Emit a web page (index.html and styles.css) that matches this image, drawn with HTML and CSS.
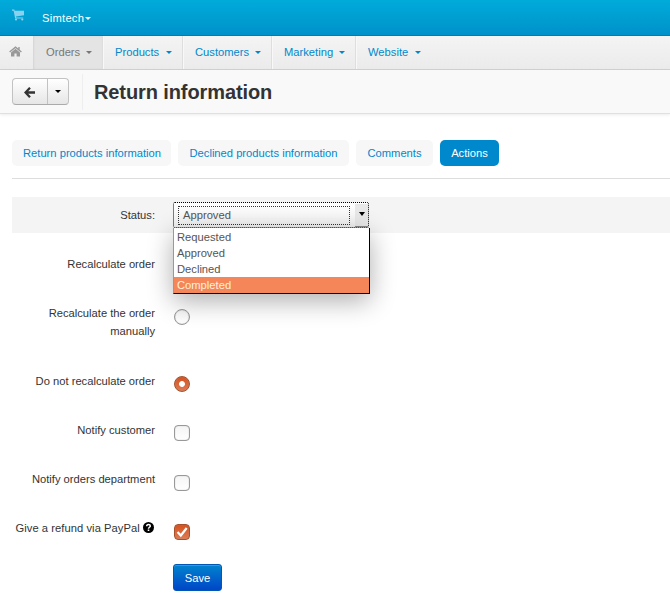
FILE: index.html
```html
<!DOCTYPE html>
<html lang="en">
<head>
<meta charset="utf-8">
<title>Return information</title>
<link rel="stylesheet" href="styles.css">
</head>
<body>
<header class="topbar">
  <svg class="cart" width="13" height="12" viewBox="0 0 13 12"><path d="M0 .5h2.300l.4 1.200H12v4.600L4 7.500l.2.900h7v1.200H3.200L1.600 1.700H0z" fill="currentColor"/><circle cx="4" cy="10.500" r="1.100" fill="currentColor"/><circle cx="10.300" cy="10.500" r="1.100" fill="currentColor"/></svg>
  <a class="company"><span class="t-company">Simtech</span><i class="caret"></i></a>
</header>
<nav class="menu">
  <a class="home"><svg width="13" height="11" viewBox="0 0 13 11"><path d="M6.500 2.700 2 6.400V10.500h3.400V7.500h2.200v3H11V6.400z" fill="currentColor"/><path d="M.6 6 6.500 1.100 12.400 6M10 1v3" fill="none" stroke="currentColor" stroke-width="1.400"/></svg></a>
  <a class="item orders active"><span>Orders</span><i class="caret"></i></a>
  <a class="item products"><span>Products</span><i class="caret"></i></a>
  <a class="item customers"><span>Customers</span><i class="caret"></i></a>
  <a class="item marketing"><span>Marketing</span><i class="caret"></i></a>
  <a class="item website"><span>Website</span><i class="caret"></i></a>
</nav>
<div class="heading">
  <div class="back-group">
    <button class="back"><svg width="12" height="11" viewBox="0 0 12 11"><path d="M6 .8 1.500 5.500 6 10.200M2 5.500H11" fill="none" stroke="#333" stroke-width="2.300"/></svg></button>
    <button class="more"><i class="caret"></i></button>
  </div>
  <h1>Return information</h1>
</div>
<main>
  <div class="tabs">
    <a class="tab t1">Return products information</a>
    <a class="tab t2">Declined products information</a>
    <a class="tab t3">Comments</a>
    <a class="tab t4 current">Actions</a>
  </div>
  <form class="form">
    <div class="row shaded">
      <label>Status:</label>
      <div class="select">
        <div class="box"><span class="value">Approved</span><span class="arrow"><i class="caret"></i></span></div>
        <ul class="options">
          <li>Requested</li><li>Approved</li><li>Declined</li><li class="chosen">Completed</li>
        </ul>
      </div>
    </div>
    <div class="row"><label>Recalculate order</label></div>
    <div class="row tall"><label>Recalculate the order manually</label><span class="control radio"></span></div>
    <div class="row"><label>Do not recalculate order</label><span class="control radio on"></span></div>
    <div class="row"><label>Notify customer</label><span class="control check"></span></div>
    <div class="row low"><label>Notify orders department</label><span class="control check"></span></div>
    <div class="row low"><label class="wide">Give a refund via PayPal <svg class="help" width="11" height="11" viewBox="0 0 11 11"><circle cx="5.500" cy="5.500" r="5.500" fill="#000"/><path d="M3.700 4.200C3.700 1.700 7.300 1.900 7.300 4 7.300 5.300 5.500 5.200 5.500 6.700" fill="none" stroke="#fff" stroke-width="1.500"/><path d="M4.700 7.500h1.600V9H4.700z" fill="#fff"/></svg></label><span class="control check on"><svg width="14" height="14" viewBox="0 0 14 14"><path d="M2.500 7 5.800 10.500 11.700 3" fill="none" stroke="#fff" stroke-width="2.200"/></svg></span></div>
    <button class="save" type="button">Save</button>
  </form>
</main>
</body>
</html>
```
FILE: styles.css
```css
* { box-sizing: border-box; }
body {
  margin: 0;
  height: 600px;
  overflow: hidden;
  background: #fff;
  color: #333;
  font: 11.2px/18px "Liberation Sans", Arial, sans-serif;
}
button { font: inherit; padding: 0; }
svg { display: block; }
.caret {
  width: 0;
  height: 0;
  border: 3px solid transparent;
  border-top-color: currentColor;
  border-bottom: 0;
}
.topbar {
  height: 36px;
  display: flex;
  padding-left: 12px;
  background: linear-gradient(#00abda, #0092ca);
  border-bottom: 1px solid #007caf;
  color: #fff;
}
.cart { margin-top: 9px; color: #8bd1ed; }
.company { display: flex; align-items: center; margin-left: 17px; height: 36px; }
.company .caret { margin-left: 1px; }
.t-company { letter-spacing: .25px; }
.menu {
  height: 34px;
  display: flex;
  background: linear-gradient(#f4f4f4, #ebebeb);
  border-bottom: 1px solid #d2d2d2;
  color: #0088cc;
}
.home { width: 33px; padding: 10px 0 0 9px; color: #999; }
.item {
  display: flex;
  align-items: center;
  justify-content: space-between;
  padding: 0 10px 2px 12px;
  border-right: 1px solid #dedede;
  box-shadow: inset 1px 0 #f8f8f8;
}
.menu .caret { margin-top: 1px; }
.orders { width: 70px; }
.products { width: 80px; }
.customers { width: 89px; }
.marketing { width: 84px; }
.website { width: 75px; border-right: 0; }
.active { background: #e4e4e4; color: #777; box-shadow: inset 1px 0 2px #d4d4d4; padding-left: 13px; }
.heading {
  height: 44px;
  display: flex;
  background: #f9f9f9;
  border-bottom: 1px solid #e0e0e0;
  box-shadow: 0 1px 3px rgba(0,0,0,.08);
  padding: 8px 12px 0;
}
.back-group {
  display: flex;
  width: 57px;
  height: 27px;
  border: 1px solid #c2c2c2;
  border-bottom-color: #aaa;
  border-radius: 4px;
  background: linear-gradient(#fff, #e6e6e6);
}
.back-group button { display: grid; place-items: center; border: 0; background: none; color: #000; }
.back-group .back { width: 34px; padding-top: 2px; }
.back-group .more { width: 21px; border-left: 1px solid #c2c2c2; }
h1 {
  margin: -4px 0 0 13px;
  padding-left: 11px;
  height: 36px;
  border-left: 1px solid #eee;
  font-size: 20px;
  line-height: 36px;
  letter-spacing: -.1px;
}
main { padding: 26px 0 0 12px; }
.tabs {
  display: flex;
  gap: 7px;
  height: 39px;
  border-bottom: 1px solid #ddd;
  color: #0088cc;
}
.tab { height: 26px; line-height: 26px; border-radius: 5px; background: #f7f7f7; text-align: center; }
.t1 { width: 159px; padding-left: 1px; }
.t2 { width: 171px; }
.t3 { width: 77px; }
.t4 { width: 59px; }
.current { background: #0088cc; color: #fff; }
.form { margin-top: 18px; }
.row { display: flex; height: 36px; padding-top: 9px; margin-bottom: 13px; }
.tall { height: 55px; }
.shaded { background: #f4f4f4; padding-top: 5px; }
.row label { width: 143px; padding-left: 2px; text-align: right; }
.row .wide { white-space: nowrap; letter-spacing: .05px; }
.shaded label { padding-top: 4px; }
.control { width: 16px; height: 16px; margin: 5px 0 0 19px; border: 1px solid #999; background: linear-gradient(#f5f5f5, #fff); }
.row:not(.tall) .control { margin-top: 4px; }
.row.low .control { margin-top: 5px; }
.radio { border-radius: 50%; box-shadow: inset 0 0 1px #999; }
.check { border-radius: 4px; box-shadow: inset 0 0 1px #999; }
.control.on { border-color: #a6502e; background: linear-gradient(#d4521f, #e07b52); }
.control.radio.on { background: radial-gradient(circle, #fff 0 2.500px, transparent 3.300px), linear-gradient(#d4521f, #e07b52); }
.help { display: inline-block; vertical-align: -1px; margin-right: 1px; }
.select { position: relative; width: 196px; margin-left: 18px; color: #555; }
.box {
  display: flex;
  height: 26px;
  border: 1px dotted #000;
  border-radius: 2px;
  background: linear-gradient(#fff, #f0f0f0);
}
.value { width: 172px; height: 19px; margin: 3px 0 0 4px; padding-left: 4px; border: 1px dotted #333; line-height: 17px; }
.arrow { width: 13px; margin: 1px 0 0 auto; display: grid; place-items: center; background: #e8e8e8; border-bottom: 1px solid #888; color: #000; }
.arrow .caret { margin-bottom: 2px; border-top-width: 4px; }
.options {
  position: absolute;
  top: 26px;
  left: 0;
  width: 197px;
  margin: 0;
  padding: 1px 0 0;
  list-style: none;
  background: #fff;
  border: solid #000;
  border-width: 0 1px 1px;
  border-left-color: #999;
  box-shadow: 0 7px 26px rgba(0,0,0,.32);
}
.options li { height: 16px; line-height: 16px; padding-left: 3px; }
.options .chosen { background: #f4865a; color: #fff0df; }
.save {
  display: block;
  width: 49px;
  height: 27px;
  margin: 18px 0 0 161px;
  border: 1px solid #0057b4;
  border-radius: 3px;
  background: linear-gradient(#0083ce, #0046c7);
  box-shadow: inset 0 1px #339bd7;
  color: #fff;
}
```
